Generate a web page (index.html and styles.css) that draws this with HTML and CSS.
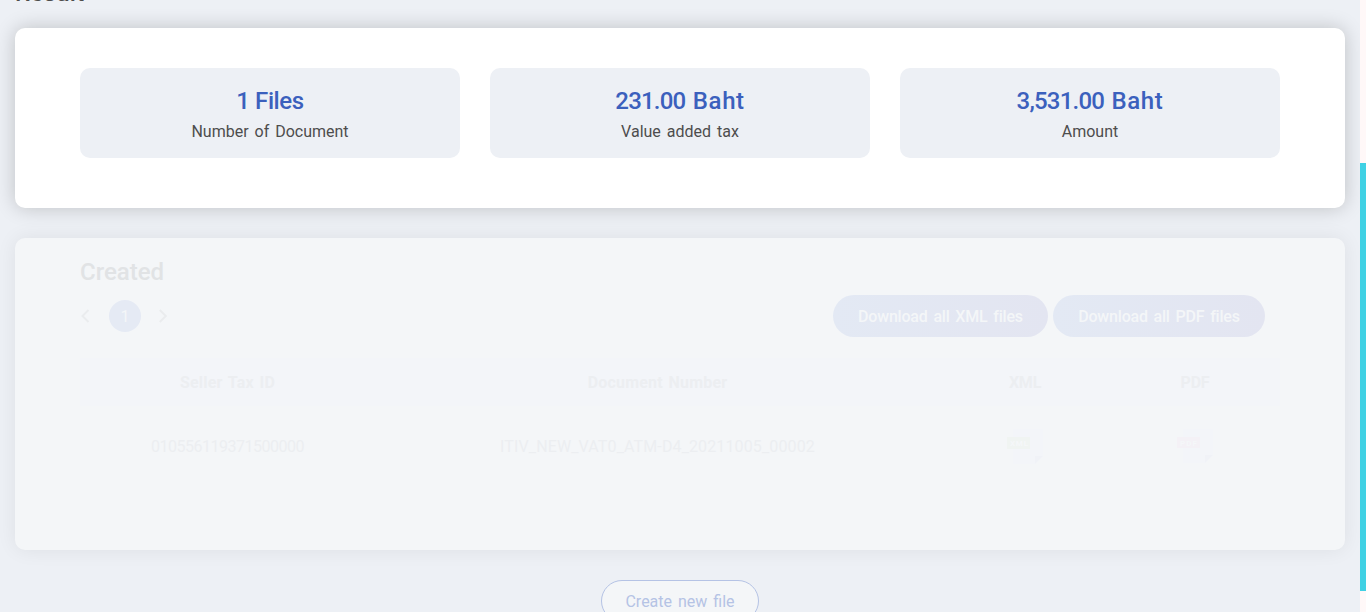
FILE: index.html
```html
<!DOCTYPE html>
<html lang="en">
<head>
<meta charset="utf-8">
<title>Result</title>
<link rel="stylesheet" href="styles.css">
</head>
<body>
<div class="page">
  <main class="content">
    <h2 class="title"><span>Result</span></h2>
    <section class="card summary">
      <div class="stat"><strong class="value v-files">1 Files</strong><span class="label">Number of Document</span></div>
      <div class="stat"><strong class="value"><span class="number">231.00</span> <span class="unit">Baht</span></strong><span class="label">Value added tax</span></div>
      <div class="stat"><strong class="value"><span class="number">3,531.00</span> <span class="unit">Baht</span></strong><span class="label">Amount</span></div>
    </section>
    <section class="card created">
      <h3 class="heading">Created</h3>
      <div class="toolbar">
        <nav class="pager">
          <svg class="arrow" viewBox="0 0 10 16"><path d="M8.500 2 2.500 8l6 6"/></svg>
          <span class="current">1</span>
          <svg class="arrow" viewBox="0 0 10 16"><path d="m.8 2 6 6-6 6"/></svg>
        </nav>
        <div class="downloads">
          <a class="download d-xml">Download all XML files</a>
          <a class="download d-pdf">Download all PDF files</a>
        </div>
      </div>
      <div class="row head">
        <span>Seller Tax ID</span><span>Document Number</span><span class="h-file">XML</span><span class="h-file">PDF</span>
      </div>
      <div class="row body">
        <span class="c-seller">010556119371500000</span>
        <span class="c-doc">ITIV_NEW_VAT0_ATM-D4_20211005_00002</span>
        <span><svg class="file" viewBox="0 0 36 36"><path class="paper" d="M6 0h30v27l-8 8H6z"/><path class="fold" d="M36 27h-8v8z"/><path class="tag-xml" d="M0 8h23v12H0z"/><text class="tag-text" x="3" y="17" textLength="18">XML</text></svg></span>
        <span><svg class="file" viewBox="0 0 36 36"><path class="paper" d="M6 0h30v26l-8 8H6z"/><path class="fold" d="M36 26h-8v8z"/><path class="tag-pdf" d="M0 8h23v11H0z"/><text class="tag-text" x="3" y="16.500" textLength="17">PDF</text></svg></span>
      </div>
    </section>
    <div class="actions"><a class="create">Create new file</a></div>
  </main>
  <div class="scroll"><div class="thumb"></div></div>
</div>
</body>
</html>
```
FILE: styles.css
```css
* { box-sizing: border-box; }
body { margin: 0; overflow: hidden; background: #edf0f5; color: #4d4d4d; font: 16px/24px Roboto, "Noto Sans", sans-serif; }
.page { display: flex; height: 612px; overflow: hidden; }
.content { flex: 1; min-width: 0; padding: 0 15px; }
.title { display: flex; align-items: flex-end; height: 28px; margin: 0; padding-bottom: 17px; font-size: 24px; font-weight: 500; line-height: 36px; letter-spacing: .3px; }
.card { border-radius: 10px; padding: 0 65px; }
.summary { display: grid; grid-template-columns: repeat(3, 1fr); gap: 30px; height: 180px; padding-top: 40px; background: #fff; box-shadow: 0 0 20px rgba(0, 0, 0, .2); }
.stat { display: flex; flex-direction: column; align-items: center; height: 90px; padding-top: 15px; border-radius: 10px; background: #edf0f5; }
.value { color: #3b60bd; font-size: 24px; font-weight: 500; line-height: 36px; }
.v-files { letter-spacing: -.4px; word-spacing: 0; }
.number { letter-spacing: -.8px; }
.unit { letter-spacing: .6px; margin-left: 1.5px; }
.label { line-height: 26px; word-spacing: 2px; }
.created { height: 312px; margin-top: 30px; background: #f4f6f8; box-shadow: 0 0 20px rgba(0, 0, 0, .07); }
.heading { height: 57px; margin: 0; padding-top: 16px; color: #e1e3e5; font-size: 24px; font-weight: 500; line-height: 36px; }
.toolbar { display: flex; justify-content: space-between; padding-right: 15px; height: 63px; }
.pager { display: flex; align-items: center; gap: 18px; height: 42px; }
.arrow { width: 10px; height: 16px; fill: none; stroke: #eaecee; stroke-width: 2; }
.current { width: 32px; height: 32px; margin-left: 1px; border-radius: 50%; background: #e5eaf4; color: #f4f6f8; text-align: center; line-height: 33px; }
.downloads { display: flex; gap: 5px; }
.download { display: flex; justify-content: center; height: 42px; border-radius: 21px; background: linear-gradient(90deg, #e3e9f4, #e3e5f1); color: #f4f6f8; font-weight: 500; line-height: 44px; letter-spacing: -.2px; word-spacing: 2px; white-space: nowrap; }
.d-xml { width: 215px; }
.d-pdf { width: 212px; }
.row { display: grid; grid-template-columns: 295px 565px 170px 170px; align-items: center; justify-items: center; color: #eceef1; }
.head { height: 48px; padding-top: 2px; background: #f3f5f9; font-weight: 700; letter-spacing: .2px; word-spacing: 1.5px; }
.h-file { letter-spacing: -.2px; }
.body { height: 82px; }
.c-seller { letter-spacing: -.5px; }
.c-doc { letter-spacing: .13px; }
.file { display: block; width: 36px; height: 36px; }
.paper { fill: #f3f5f9; }
.fold { fill: #f0f2f7; }
.tag-xml { fill: #f0f4f2; }
.tag-pdf { fill: #f4f1f6; }
.tag-text { fill: #f5f7f9; font: 700 8px Roboto, sans-serif; }
.actions { display: flex; justify-content: center; margin-top: 30px; }
.create { display: flex; justify-content: center; width: 158px; height: 42px; border: 1px solid #b5c3e5; border-radius: 21px; background: #f4f6f8; color: #b5c3e5; line-height: 42px; word-spacing: 2px; }
.scroll { width: 6px; padding-top: 163px; background: #fff8f8; }
.thumb { height: 428px; background: #40d1e4; }
```
